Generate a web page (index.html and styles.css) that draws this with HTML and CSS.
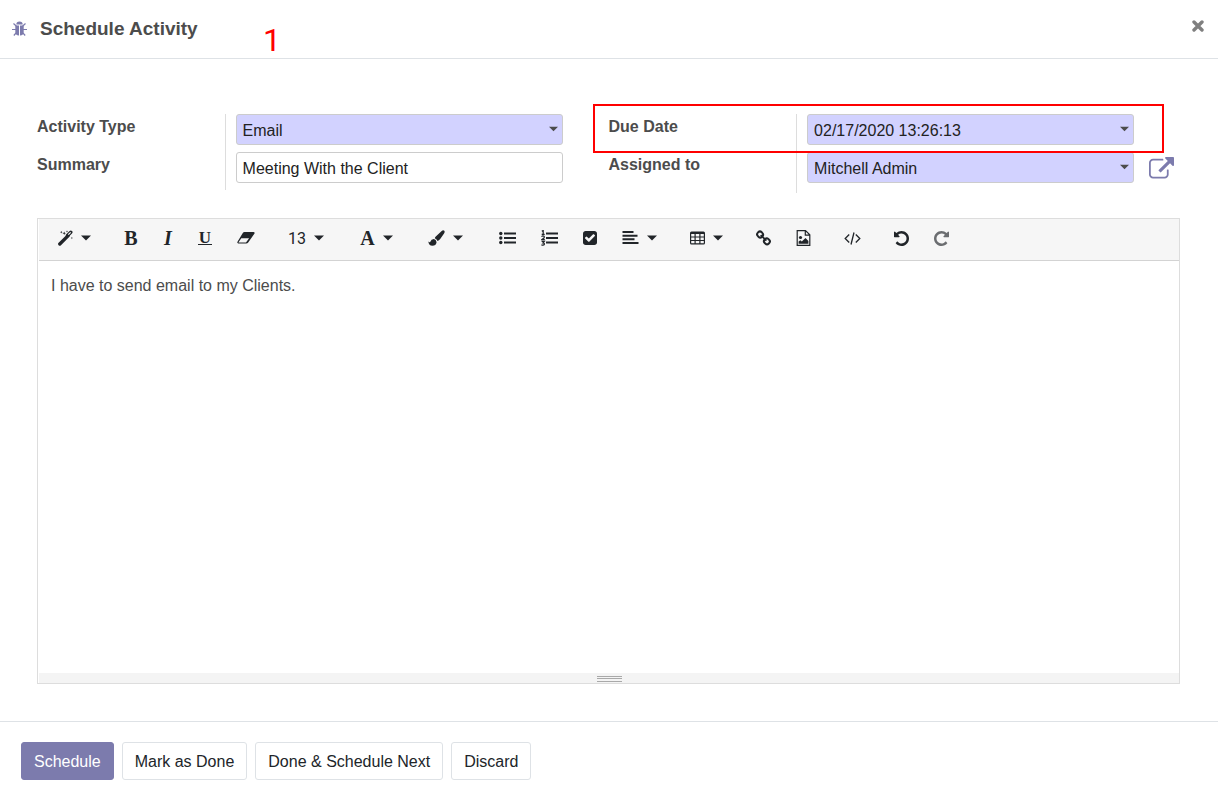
FILE: index.html
```html
<!DOCTYPE html>
<html lang="en">
<head>
<meta charset="utf-8">
<title>Schedule Activity</title>
<link rel="stylesheet" href="styles.css">
</head>
<body>
<svg class="defs" aria-hidden="true">
  <symbol id="caret" viewBox="0 0 10 6"><path d="M0 .5h10L5 5.5z"/></symbol>
</svg>
<div class="dialog">
  <header class="dialog-header">
    <svg class="bug" viewBox="0 0 15 16" width="15" height="16" fill="#7c7bad" aria-hidden="true">
      <path d="M4.300 3.500a3.200 3 0 0 1 6.400 0z"/>
      <path d="M3.300 4.500h3.700v10c-2.500 0-3.700-1.500-3.700-4zM8 4.500h3.700v6c0 2.500-1.200 4-3.700 4z"/>
      <path d="M1.500 2.500l3 2.800M13.500 2.500l-3 2.800M0 8.500h4M11 8.500h4M1.800 14.500l2.700-3M13.200 14.500l-2.700-3" fill="none" stroke="#7c7bad" stroke-width="1.200"/>
    </svg>
    <h1 class="title">Schedule Activity</h1>
    <span class="step-note">1</span>
    <button class="close" type="button" aria-label="Close">
      <svg viewBox="0 0 12 12" width="12" height="12" aria-hidden="true"><path d="M2 2l8 8M10 2l-8 8" stroke="#7f7f7f" stroke-width="3.400" stroke-linecap="round"/></svg>
    </button>
  </header>

  <main class="dialog-body">
    <form class="fields">
      <div class="column">
        <div class="row">
          <label class="label" for="type">Activity Type</label>
          <div class="control"><select class="field required" id="type"><option>Email</option></select><svg class="field-caret"><use href="#caret"/></svg></div>
        </div>
        <div class="row">
          <label class="label" for="summary">Summary</label>
          <div class="control"><input class="field" id="summary" type="text" value="Meeting With the Client"></div>
        </div>
      </div>
      <div class="column">
        <div class="row">
          <label class="label" for="due">Due Date</label>
          <div class="control"><input class="field required" id="due" type="text" value="02/17/2020 13:26:13"><svg class="field-caret"><use href="#caret"/></svg></div>
        </div>
        <div class="row last">
          <label class="label" for="assigned">Assigned to</label>
          <div class="control"><select class="field required" id="assigned"><option>Mitchell Admin</option></select><svg class="field-caret"><use href="#caret"/></svg></div>
          <button class="external" type="button" aria-label="External link">
            <svg viewBox="0 0 1792 1792" width="25" height="25" fill="#7c7bad" aria-hidden="true"><path d="M1408 928v320q0 119-84.500 203.500t-203.500 84.500h-832q-119 0-203.500-84.500t-84.500-203.500v-832q0-119 84.500-203.500t203.500-84.500h704q14 0 23 9t9 23v64q0 14-9 23t-23 9h-704q-66 0-113 47t-47 113v832q0 66 47 113t113 47h832q66 0 113-47t47-113v-320q0-14 9-23t23-9h64q14 0 23 9t9 23zm384-864v512q0 26-19 45t-45 19-45-19l-176-176-652 652q-10 10-23 10t-23-10l-114-114q-10-10-10-23t10-23l652-652-176-176q-19-19-19-45t19-45 45-19h512q26 0 45 19t19 45z"/></svg>
          </button>
        </div>
        <div class="highlight"></div>
      </div>
    </form>

    <section class="editor">
      <div class="toolbar" role="toolbar" aria-label="Formatting">
        <div class="group">
          <button class="tool" type="button" aria-label="Style">
            <svg viewBox="0 0 15 16" width="15" height="16"><path d="M1.800 14L10.200 5.600" stroke="currentColor" stroke-width="3.400" stroke-linecap="round"/><path d="M9.500 5.500L12.800 2.200" stroke="currentColor" stroke-width="3.400" stroke-linecap="round"/><path d="M10.300 4.700L12.700 2.300" stroke="#f6f6f6" stroke-width="1.200"/><path d="M2 2.200l.9-.4.4-.9.400.9.900.4-.9.400-.4.900-.4-.9zM4.500 3.200l1.200-.5.500-1.200.5 1.200 1.200.5-1.200.5-.5 1.200-.5-1.200zM7.800 1.500l.9-.3.300-.9.300.9.900.3-.9.300-.3.900-.3-.9zM12.700 8l.9-.3.300-.9.300.9.800.3-.8.300-.3.900-.3-.9z"/></svg>
            <svg class="caret"><use href="#caret"/></svg>
          </button>
        </div>
        <div class="group">
          <button class="tool" type="button" aria-label="Bold"><span class="glyph bold">B</span></button>
          <button class="tool" type="button" aria-label="Italic"><span class="glyph italic">I</span></button>
          <button class="tool" type="button" aria-label="Underline"><span class="glyph underline">U</span></button>
          <button class="tool" type="button" aria-label="Remove style">
            <svg viewBox="0 0 18 16" width="18" height="16"><path d="M7.500 2h9q1.500.1 1 1.500l-6.300 9q-.8 1-2 1H1.300Q-.2 13.200.5 11.800L5.800 3Q6.400 2 7.500 2zM9 12.400l3.100-4.200H4.300L1.500 12.200q-.1.200.1.200z" fill-rule="evenodd"/></svg>
          </button>
        </div>
        <div class="group">
          <button class="tool" type="button"><span class="size">13</span><svg class="caret"><use href="#caret"/></svg></button>
        </div>
        <div class="group colors">
          <button class="tool" type="button" aria-label="Font color"><span class="glyph wide">A</span><svg class="caret"><use href="#caret"/></svg></button>
          <button class="tool" type="button" aria-label="Background color">
            <svg viewBox="0 0 17 16" width="17" height="16"><path d="M15.200.2q1.500 0 1.500 1.500-.2 1.200-1 2.400l-3.500 5q-1.200 1.500-2.700 2Q9 9 6.800 8.200q.2-.9 1-1.700l5.900-5.600q.8-.7 1.500-.7zM5.900 9q2.300.4 2.600 2.900v.6q-.6 3.300-4.100 3.300Q.8 15.700.3 11.500l1.200.7q.5.100.8-.5Q3.100 9 5.900 9z"/></svg>
            <svg class="caret"><use href="#caret"/></svg>
          </button>
        </div>
        <div class="group">
          <button class="tool" type="button" aria-label="Unordered list">
            <svg viewBox="0 0 17 16" width="17" height="16"><circle cx="1.800" cy="3.500" r="1.700"/><circle cx="1.800" cy="8" r="1.700"/><circle cx="1.800" cy="12.500" r="1.700"/><path d="M5 2.500h12v2H5zM5 7h12v2H5zM5 11.500h12v2H5z"/></svg>
          </button>
          <button class="tool" type="button" aria-label="Ordered list">
            <svg viewBox="0 0 17 16" width="17" height="16"><path d="M5 2.500h12v2H5zM5 7h12v2H5zM5 11.500h12v2H5z"/><path d="M.8 1.300L2.200.5v4M.7 4.400h3M.5 6.600q1-.9 2.200-.5 1.100.8.200 1.900L.7 9.700h3.100M.6 11.400h2.700l-1.400 1.500q1.600.1 1.500 1.300-.4 1.300-3 .7" fill="none" stroke="currentColor" stroke-width="1.200"/></svg>
          </button>
          <button class="tool" type="button" aria-label="Checklist">
            <svg viewBox="128 128 1536 1536" width="14" height="14"><path d="M813 1299l614-614q19-19 19-45t-19-45l-102-102q-19-19-45-19t-45 19l-467 467-211-211q-19-19-45-19t-45 19l-102 102q-19 19-19 45t19 45l358 358q19 19 45 19t45-19zm851-883v960q0 119-84.500 203.500t-203.500 84.500h-960q-119 0-203.500-84.500t-84.500-203.500v-960q0-119 84.500-203.500t203.500-84.500h960q119 0 203.500 84.500t84.500 203.500z"/></svg>
          </button>
          <button class="tool" type="button" aria-label="Paragraph">
            <svg viewBox="0 0 17 16" width="17" height="16"><path d="M.5 1h11v2H.5zM.5 4.700h15v2H.5zM.5 8.300h12v2H.5zM.5 12h16v2H.5z"/></svg>
            <svg class="caret"><use href="#caret"/></svg>
          </button>
        </div>
        <div class="group">
          <button class="tool" type="button" aria-label="Table">
            <svg viewBox="0 0 15 14" width="15" height="14"><path d="M1.500.5h12q1.500 0 1.500 1.500v10q0 1.500-1.500 1.500h-12Q0 13.500 0 12V2Q0 .5 1.500.5zM1.200 3v2.600H4.500V3zM5.700 3v2.600h3.600V3zM10.500 3v2.600h3.300V3zM1.200 6.600v2.300H4.500V6.600zM5.700 6.600v2.300h3.600V6.600zM10.500 6.600v2.300h3.300V6.600zM1.200 9.900v2.400H4.500V9.900zM5.700 9.900v2.400h3.600V9.900zM10.500 9.900v2.400h3.300V9.900z" fill-rule="evenodd"/></svg>
            <svg class="caret"><use href="#caret"/></svg>
          </button>
        </div>
        <div class="group">
          <button class="tool" type="button" aria-label="Link">
            <svg viewBox="0 0 15 16" width="15" height="16" fill="none" stroke="currentColor" stroke-width="2"><rect x="1.200" y="1.800" width="5.800" height="5.400" rx="2.500" transform="rotate(45 4.100 4.500)"/><rect x="8" y="8.600" width="5.800" height="5.400" rx="2.500" transform="rotate(45 10.900 11.300)"/><path d="M4.700 5.100l5.700 5.600" stroke-width="1.800"/></svg>
          </button>
          <button class="tool" type="button" aria-label="Picture">
            <svg viewBox="0 0 15 16" width="15" height="16"><path d="M1.200.6h8.300l4.300 4.200v10.600H1.200zM9.300.8v4.400h4.400" fill="none" stroke="currentColor" stroke-width="1.200"/><circle cx="4.500" cy="7.500" r="1.600"/><path d="M2.600 13.800v-2.200l1.800-1.400 1.400 1.200L9.500 8l2.900 2.900v2.900z"/></svg>
          </button>
        </div>
        <div class="group">
          <button class="tool" type="button" aria-label="Code view">
            <svg viewBox="0 0 17 14" width="17" height="14" fill="none" stroke="currentColor" stroke-width="1.300"><path d="M5.200 3.500L1.200 7.500l4 4M11.800 3.500l4 4-4 4M10 1.500L7 13.500"/></svg>
          </button>
        </div>
        <div class="group">
          <button class="tool" type="button" aria-label="Undo">
            <svg viewBox="128 128 1536 1536" width="15" height="15"><path id="turn" d="M1664 896q0 156-61 298t-164 245-245 164-298 61q-172 0-327-72.500t-264-204.500q-7-10-6.500-22.500t8.500-20.500l137-138q10-9 25-9 16 2 23 12 73 95 179 147t225 52q104 0 198.500-40.500t163.500-109.500 109.500-163.500 40.500-198.500-40.500-198.500-109.500-163.500-163.500-109.500-198.500-40.500q-98 0-188 35.500t-160 101.500l137 138q31 30 14 69-17 40-59 40h-448q-26 0-45-19t-19-45v-448q0-42 40-59 39-17 69 14l130 129q107-101 244.500-156.500t284.500-55.500q156 0 298 61t245 164 164 245 61 298z"/></svg>
          </button>
          <button class="tool" type="button" aria-label="Redo" disabled>
            <svg viewBox="128 128 1536 1536" width="15" height="15"><use href="#turn" transform="translate(1792 0) scale(-1 1)"/></svg>
          </button>
        </div>
      </div>
      <div class="content" contenteditable="true" role="textbox" aria-label="Note">I have to send email to my Clients.</div>
      <div class="resize"><span class="grip"></span></div>
    </section>
  </main>

  <footer class="dialog-footer">
    <button class="button primary" type="button">Schedule</button>
    <button class="button" type="button">Mark as Done</button>
    <button class="button" type="button">Done &amp; Schedule Next</button>
    <button class="button" type="button">Discard</button>
  </footer>
</div>
</body>
</html>
```
FILE: styles.css
```css
* { box-sizing: border-box; }
body {
  margin: 0;
  background: #fff;
  color: #4c4c4c;
  font: 16px/24px "Liberation Sans", Arial, sans-serif;
}
button, input, select { font: inherit; }
svg { display: block; flex: none; }
.defs { position: absolute; width: 0; height: 0; }

.dialog { display: flex; flex-direction: column; min-height: 100vh; }
.dialog-header {
  position: relative;
  display: flex;
  align-items: center;
  gap: 13px;
  height: 59px;
  padding: 0 13px 0 12px;
  border-bottom: 1px solid #dee2e6;
}
.title { margin: 0; font-size: 19px; line-height: 28px; }
.step-note {
  position: absolute;
  left: 263px;
  top: 20px;
  color: #f00;
  font: 32px/40px Roboto, sans-serif;
}
.close {
  margin-left: auto;
  padding: 0 1px 7px;
  border: 0;
  background: none;
}

.dialog-body {
  flex: 1;
  display: flex;
  flex-direction: column;
  padding: 55px 38px 37px 37px;
}
.fields { display: grid; grid-template-columns: 1fr 1fr; margin-bottom: 25px; }
.column { position: relative; }
.row { display: grid; grid-template-columns: 33% 1fr 46px; height: 38px; }
.row.last { height: 41px; }
.label { padding-top: 1px; border-right: 1px solid #ddd; font-weight: bold; }
.control { position: relative; padding-left: 10px; }
.field {
  display: block;
  width: 100%;
  height: 31px;
  padding: 2px 5px 0 6px;
  border: 1px solid #ccc;
  border-radius: 3px;
  background: #fff;
  color: #222;
  appearance: none;
}
.field.required { background: #d2d2ff; }
.field-caret {
  position: absolute;
  top: 12px;
  right: 5px;
  width: 9px;
  height: 6px;
  fill: #4c4c4c;
  pointer-events: none;
}
.external {
  align-self: start;
  justify-self: start;
  margin-left: 15px;
  padding: 5px 0 0;
  border: 0;
  background: none;
}
.highlight {
  position: absolute;
  inset: -10px 16px auto -16px;
  height: 49px;
  border: 2px solid #f00;
  pointer-events: none;
}

.editor {
  flex: 1;
  display: flex;
  flex-direction: column;
  padding-left: 1px;
  border: 1px solid #ddd;
}
.toolbar {
  display: flex;
  flex-wrap: wrap;
  gap: 9px;
  padding: 0 7px 3px;
  border-bottom: 1px solid #d3d3d3;
  background: #f6f6f6;
}
.group { display: flex; gap: 1px; }
.group.colors { gap: 11px; margin: 0 3px; }
.tool {
  display: flex;
  align-items: center;
  gap: 8px;
  height: 38px;
  padding: 0 12px;
  border: 0;
  background: none;
  color: #212529;
  fill: currentColor;
}
.tool:disabled { opacity: .65; }
.caret { width: 10px; height: 6px; }
.glyph {
  width: 14px;
  font: bold 20px/20px "Liberation Serif", serif;
  text-align: center;
}
.wide { width: 15px; }
.italic { width: 10px; font-style: italic; }
.underline {
  height: 14px;
  border-bottom: 1px solid;
  font-size: 17px;
  line-height: 13px;
}
.size { padding-top: 1px; font-family: Roboto, sans-serif; }
.content { flex: 1; padding: 13px 12px; outline: 0; }
.resize {
  display: flex;
  justify-content: center;
  height: 10px;
  padding-top: 3px;
  background: #f4f4f4;
}
.grip {
  width: 25px;
  height: 6px;
  border-top: 1px solid #a9a9a9;
  border-bottom: 1px solid #a9a9a9;
  background: linear-gradient(#a9a9a9, #a9a9a9) 0 1px / 100% 1px no-repeat;
}

.dialog-footer {
  display: flex;
  flex-wrap: wrap;
  gap: 8px;
  padding: 20px 21px 26px;
  border-top: 1px solid #dee2e6;
}
.button {
  height: 38px;
  padding: 2px 12px 0;
  border: 1px solid #dee2e6;
  border-radius: 3px;
  background: #fff;
  color: #212529;
}
.button.primary { border-color: #7c7bad; background: #7c7bad; color: #fff; }
```
